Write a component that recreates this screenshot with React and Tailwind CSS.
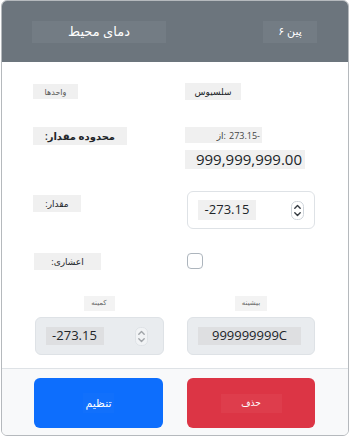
import React from 'react';

const Spinner = ({ faded }) => (
    <svg width="13" height="19" viewBox="0 0 13 19" className={faded ? 'opacity-40' : ''}>
        <rect x="0.5" y="0.5" width="12" height="18" rx="5" fill="white" stroke="#ced4da" />
        <path d="M3.8 7.2 6.5 4.6 9.2 7.2" fill="none" stroke="#343a40" strokeWidth="1.4" strokeLinecap="round" strokeLinejoin="round" />
        <path d="M3.8 11.8 6.5 14.4 9.2 11.8" fill="none" stroke="#343a40" strokeWidth="1.4" strokeLinecap="round" strokeLinejoin="round" />
    </svg>
);

export default function App() {
    return (
        <div className="w-[351px] h-[438px] bg-white font-['Open_Sans','DejaVu_Sans',sans-serif] text-[#212529]">
            <div className="ml-[1px] w-[348px] h-[436px] border border-[#b5b9bd] rounded-[6px] overflow-hidden flex flex-col">
                {/* Header */}
                <div className="h-[61px] shrink-0 bg-[#6c757d] flex items-center justify-between pl-[30px] pr-[31px]">
                    <div dir="rtl" className="w-[134px] h-[22px] bg-[#737c84] text-white text-[13px] flex items-center justify-center">
                        دمای محیط
                    </div>
                    <div dir="rtl" className="w-[54px] h-[22px] bg-[#737c84] text-white text-[11px] flex items-center justify-center">
                        پین ۶
                    </div>
                </div>

                {/* Body */}
                <div className="h-[306px] shrink-0 px-[31px] flex flex-col">
                    {/* Units */}
                    <div className="grid grid-cols-[130px_130px] gap-x-[22px] mt-[21px] h-[17px]">
                        <div>
                            <div dir="rtl" className="mt-[1px] w-[45px] h-[15px] bg-[#f0f0f0] text-[8px] text-[#555] flex items-center justify-center">واحدها</div>
                        </div>
                        <div>
                            <div dir="rtl" className="w-[56px] h-[17px] bg-[#f0f0f0] text-[9px] flex items-center justify-center">سلسیوس</div>
                        </div>
                    </div>

                    {/* Range */}
                    <div className="grid grid-cols-[130px_130px] gap-x-[22px] mt-[27px] h-[42px]">
                        <div>
                            <div dir="rtl" className="w-[94px] h-[18px] bg-[#f0f0f0] text-[10px] font-semibold flex items-center justify-center">محدوده مقدار:</div>
                        </div>
                        <div className="flex flex-col gap-[7px]">
                            <div className="w-[77px] h-[16px] bg-[#f0f0f0] text-[9px] leading-none text-[#444] flex items-center justify-end pr-[2px]">
                                <span>از</span>
                                <span className="mr-[3px]">:</span>
                                <span>273.15</span>
                                <span>-</span>
                            </div>
                            <div className="w-[120px] h-[19px] bg-[#f0f0f0] text-[15px] leading-none flex items-center justify-end pr-[3px]">
                                999,999,999.00
                            </div>
                        </div>
                    </div>

                    {/* Value */}
                    <div className="grid grid-cols-[130px_130px] gap-x-[22px] mt-[22px] h-[38px]">
                        <div className="pt-[4px]">
                            <div dir="rtl" className="w-[48px] h-[17px] bg-[#f0f0f0] text-[9px] flex items-center justify-center">مقدار:</div>
                        </div>
                        <div className="pl-[2px]">
                            <div className="w-[128px] h-[38px] border border-[#dee2e6] rounded-[6px] bg-white flex items-center justify-between pl-[10px] pr-[10px]">
                                <div className="w-[58px] h-[20px] bg-[#f0f0f0] text-[13px] flex items-center justify-center">-273.15</div>
                                <Spinner />
                            </div>
                        </div>
                    </div>

                    {/* Decimal */}
                    <div className="grid grid-cols-[130px_130px] gap-x-[22px] mt-[24px] h-[17px]">
                        <div>
                            <div dir="rtl" className="ml-[1px] w-[67px] h-[17px] bg-[#f0f0f0] text-[9px] flex items-center justify-center">اعشاری:</div>
                        </div>
                        <div className="pl-[2px]">
                            <div className="w-[16px] h-[16px] border border-[#adb5bd] rounded-[4px] bg-white"></div>
                        </div>
                    </div>

                    {/* Min / Max */}
                    <div className="grid grid-cols-[130px_130px] gap-x-[22px] mt-[26px]">
                        <div className="flex flex-col items-center gap-[6px] pl-[2px]">
                            <div dir="rtl" className="w-[31px] h-[15px] bg-[#f3f3f3] text-[7px] text-[#666] flex items-center justify-center">کمینه</div>
                            <div className="w-[129px] h-[38px] border border-[#dee2e6] rounded-[6px] bg-[#e9ecef] flex items-center justify-between pl-[10px] pr-[15px]">
                                <div className="w-[58px] h-[18px] bg-[#dedfe1] text-[13px] flex items-center justify-center">-273.15</div>
                                <Spinner faded />
                            </div>
                        </div>
                        <div className="flex flex-col items-center gap-[6px] pl-[2px]">
                            <div dir="rtl" className="w-[32px] h-[15px] bg-[#f3f3f3] text-[7px] text-[#666] flex items-center justify-center">بیشینه</div>
                            <div className="w-[128px] h-[38px] border border-[#dee2e6] rounded-[6px] bg-[#e9ecef] flex items-center pl-[10px]">
                                <div className="w-[103px] h-[18px] bg-[#dedfe1] text-[13px] flex items-center justify-center">999999999C</div>
                            </div>
                        </div>
                    </div>
                </div>

                {/* Footer */}
                <div className="flex-1 bg-[#f8f9fa] border-t border-[#dee2e6] px-[32px] pt-[9px]">
                    <div className="grid grid-cols-[129px_128px] gap-x-[24px]">
                        <button className="h-[50px] rounded-[6px] bg-[#0d6efd] text-white flex items-center justify-center">
                            <span dir="rtl" className="w-[31px] h-[20px] bg-[#1170fc] text-[11px] flex items-center justify-center">تنظیم</span>
                        </button>
                        <button className="h-[50px] rounded-[6px] bg-[#dc3545] text-white flex items-center justify-center">
                            <span dir="rtl" className="w-[61px] h-[19px] bg-[#de3d4c] text-[9px] flex items-center justify-center">حذف</span>
                        </button>
                    </div>
                </div>
            </div>
        </div>
    );
}
